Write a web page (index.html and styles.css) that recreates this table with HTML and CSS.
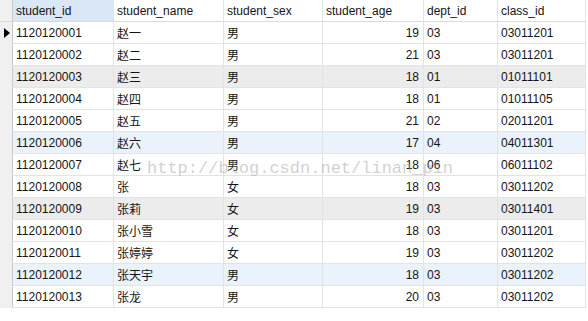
FILE: index.html
```html
<!DOCTYPE html>
<html>
<head>
<meta charset="utf-8">
<link rel="stylesheet" href="styles.css">
</head>
<body>
<div class="wrap">
  <div class="grid">
    <div class="cell gut hd"></div>
    <div class="cell hd sel">student_id</div>
    <div class="cell hd">student_name</div>
    <div class="cell hd">student_sex</div>
    <div class="cell hd">student_age</div>
    <div class="cell hd">dept_id</div>
    <div class="cell hd">class_id</div>

    <div class="cell gut"><span class="arrow"></span></div>
    <div class="cell">1120120001</div><div class="cell">赵一</div><div class="cell">男</div><div class="cell num">19</div><div class="cell">03</div><div class="cell">03011201</div>

    <div class="cell gut"></div>
    <div class="cell">1120120002</div><div class="cell">赵二</div><div class="cell">男</div><div class="cell num">21</div><div class="cell">03</div><div class="cell">03011201</div>

    <div class="cell gut"></div>
    <div class="cell g">1120120003</div><div class="cell g">赵三</div><div class="cell g">男</div><div class="cell g num">18</div><div class="cell g">01</div><div class="cell g">01011101</div>

    <div class="cell gut"></div>
    <div class="cell">1120120004</div><div class="cell">赵四</div><div class="cell">男</div><div class="cell num">18</div><div class="cell">01</div><div class="cell">01011105</div>

    <div class="cell gut"></div>
    <div class="cell">1120120005</div><div class="cell">赵五</div><div class="cell">男</div><div class="cell num">21</div><div class="cell">02</div><div class="cell">02011201</div>

    <div class="cell gut"></div>
    <div class="cell b">1120120006</div><div class="cell b">赵六</div><div class="cell b">男</div><div class="cell b num">17</div><div class="cell b">04</div><div class="cell b">04011301</div>

    <div class="cell gut"></div>
    <div class="cell">1120120007</div><div class="cell">赵七</div><div class="cell">男</div><div class="cell num">18</div><div class="cell">06</div><div class="cell">06011102</div>

    <div class="cell gut"></div>
    <div class="cell">1120120008</div><div class="cell">张</div><div class="cell">女</div><div class="cell num">18</div><div class="cell">03</div><div class="cell">03011202</div>

    <div class="cell gut"></div>
    <div class="cell g">1120120009</div><div class="cell g">张莉</div><div class="cell g">女</div><div class="cell g num">19</div><div class="cell g">03</div><div class="cell g">03011401</div>

    <div class="cell gut"></div>
    <div class="cell">1120120010</div><div class="cell">张小雪</div><div class="cell">女</div><div class="cell num">18</div><div class="cell">03</div><div class="cell">03011201</div>

    <div class="cell gut"></div>
    <div class="cell">1120120011</div><div class="cell">张婷婷</div><div class="cell">女</div><div class="cell num">19</div><div class="cell">03</div><div class="cell">03011202</div>

    <div class="cell gut"></div>
    <div class="cell b">1120120012</div><div class="cell b">张天宇</div><div class="cell b">男</div><div class="cell b num">18</div><div class="cell b">03</div><div class="cell b">03011202</div>

    <div class="cell gut"></div>
    <div class="cell">1120120013</div><div class="cell">张龙</div><div class="cell">男</div><div class="cell num">20</div><div class="cell">03</div><div class="cell">03011202</div>
  </div>
  <div class="watermark">http://blog.csdn.net/linan_pin</div>
</div>
</body>
</html>
```

FILE: styles.css
```css
html, body {
  margin: 0;
  padding: 0;
  background: #ffffff;
}
.wrap {
  position: relative;
  width: 588px;
  height: 321px;
  overflow: hidden;
}
.grid {
  display: grid;
  grid-template-columns: 13px 101px 110px 99px 101px 74px 88px;
  grid-auto-rows: 22px;
  font-family: "Liberation Sans", "Noto Sans CJK SC", sans-serif;
  font-size: 12px;
  color: #141414;
}
.cell {
  box-sizing: border-box;
  border-right: 1px solid #e3e3e3;
  border-bottom: 1px solid #e3e3e3;
  padding: 0 4px 0 3px;
  display: flex;
  align-items: center;
  white-space: nowrap;
  overflow: hidden;
}
.hd {
  background: #ffffff;
  border-bottom-color: #dadada;
  border-right-color: #e3e3e3;
}
.hd.sel {
  background: #d9e7f7;
}
.gut {
  background: #f0f0f0;
  border-right-color: #c9c9c9;
  border-bottom-color: #f0f0f0;
  padding: 0;
  justify-content: center;
}
.gut.hd {
  background: #f0f0f0;
  border-bottom-color: #dadada;
}
.num {
  justify-content: flex-end;
}
.g {
  background: #ececec;
}
.b {
  background: #eaf2fc;
}
.arrow {
  width: 0;
  height: 0;
  border-top: 5px solid transparent;
  border-bottom: 5px solid transparent;
  border-left: 6px solid #000000;
  margin-left: 1px;
}
.watermark {
  position: absolute;
  left: 147px;
  top: 159px;
  font-family: "Liberation Mono", monospace;
  font-size: 17px;
  color: rgba(170, 170, 170, 0.55);
  white-space: nowrap;
  pointer-events: none;
}
```
